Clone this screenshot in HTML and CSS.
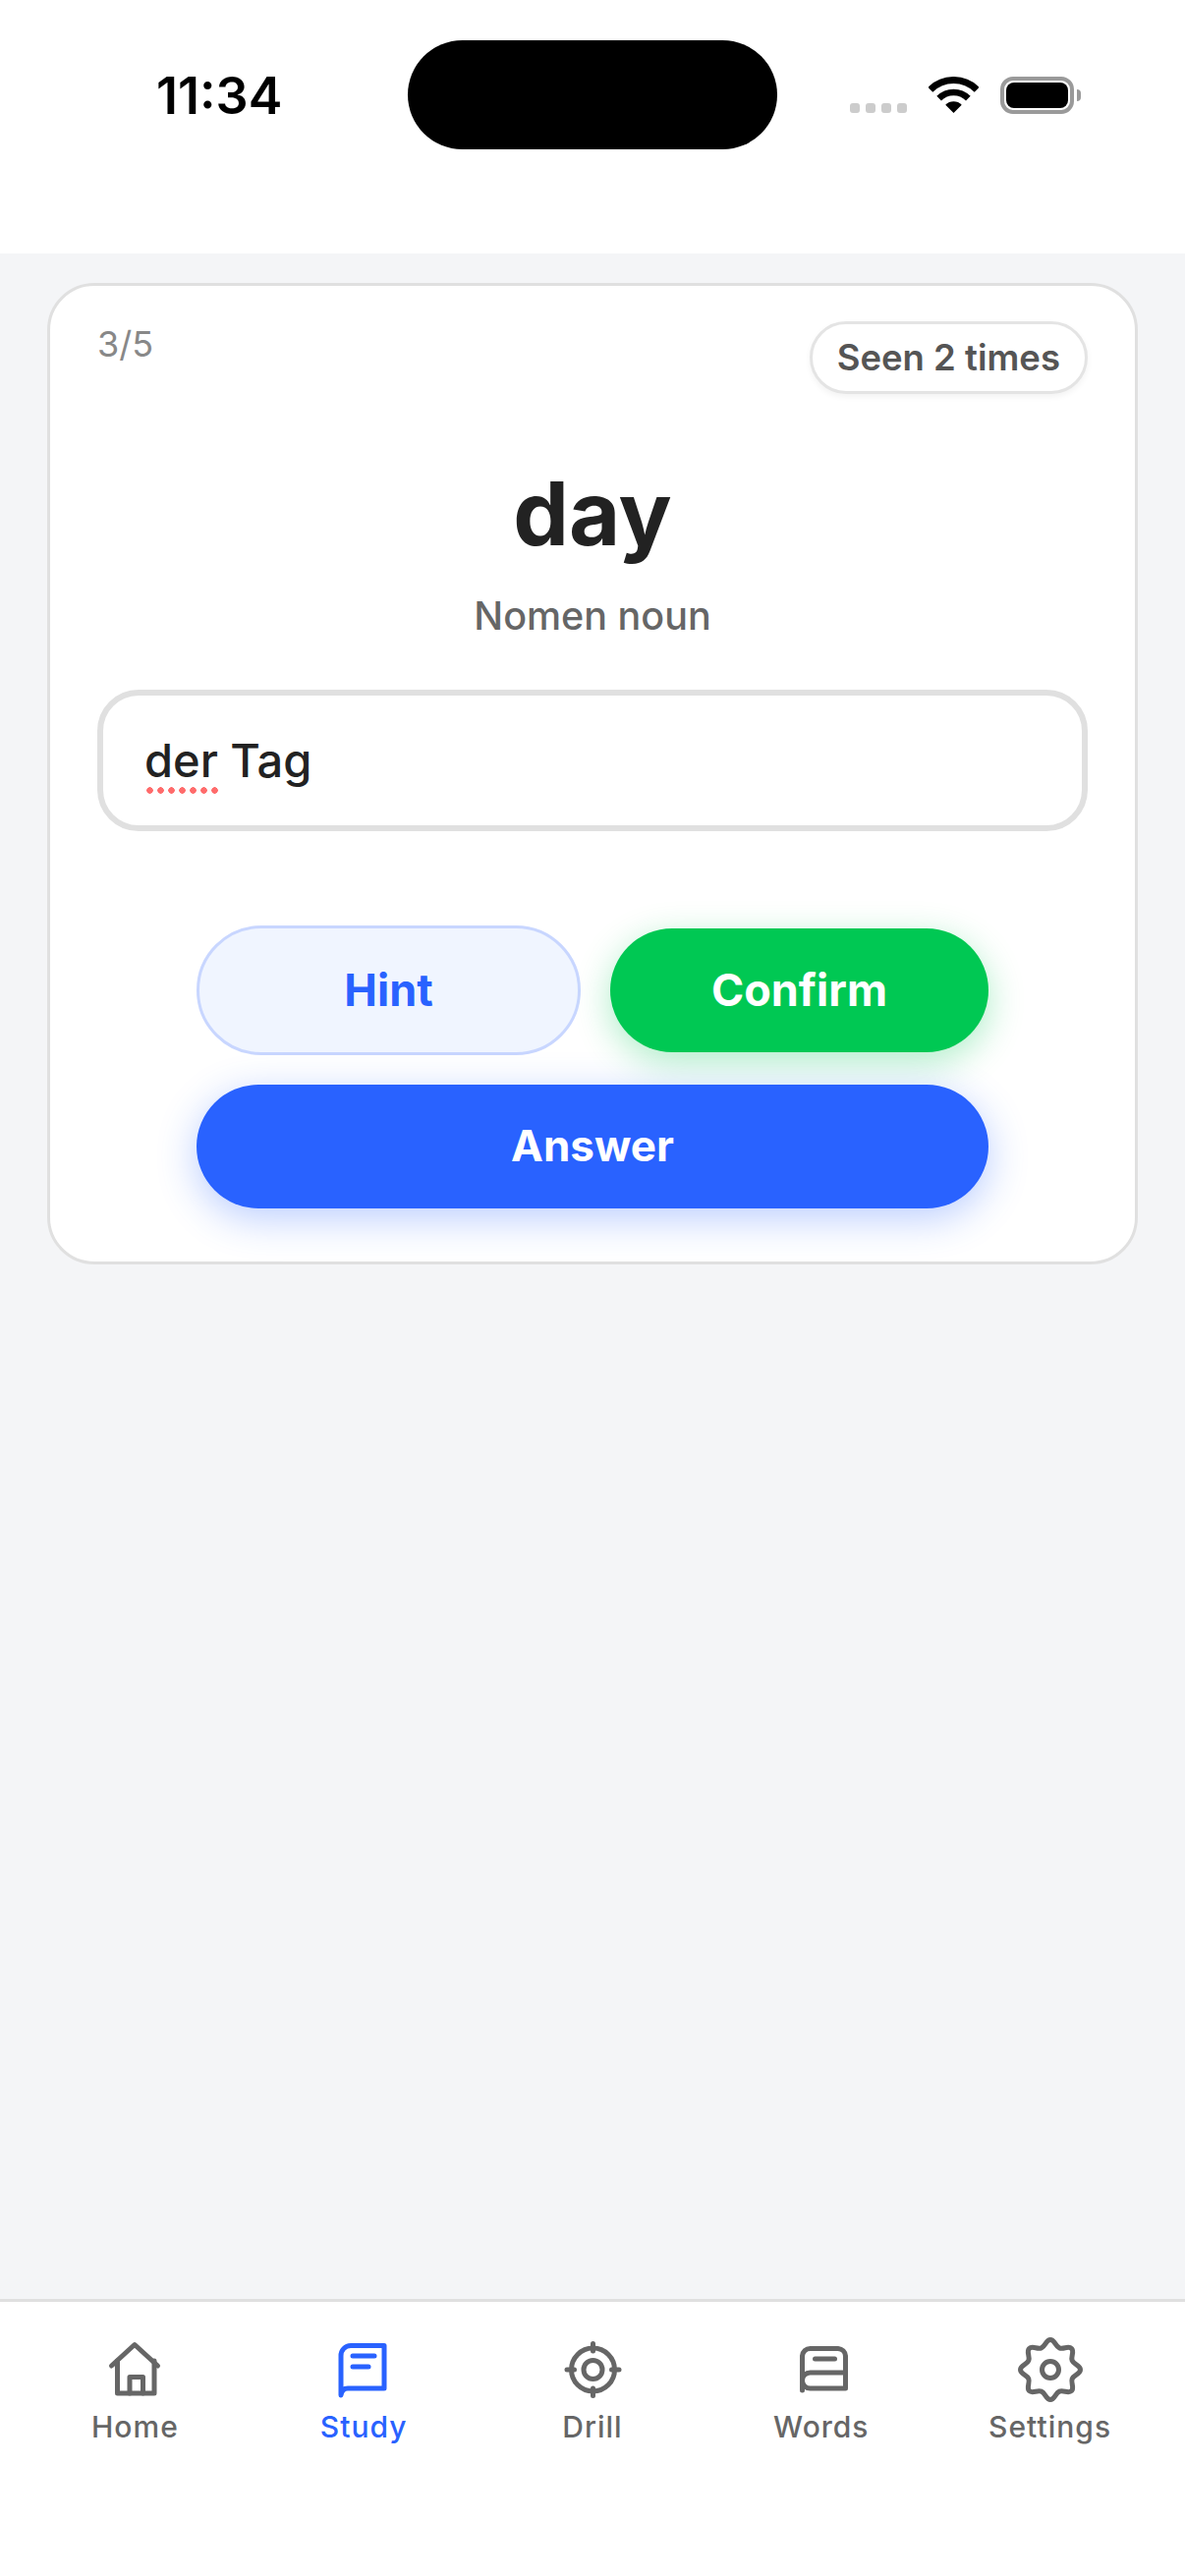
FILE: index.html
```html
<!DOCTYPE html>
<html lang="en">
<head>
    <meta charset="UTF-8">
    <meta name="viewport" content="width=device-width, initial-scale=1.0">
    <title>Study</title>
    <link rel="stylesheet" href="styles.css">
</head>
<body>
    <!-- status bar -->
    <header class="status-bar">
        <div class="status-time">11:34</div>
        <div class="island"></div>
        <div class="status-icons">
            <div class="signal"><span></span><span></span><span></span><span></span></div>
            <svg class="wifi" width="51" height="37" viewBox="0 0 51 37">
                <path d="M1.81 13.31A33.5 33.5 0 0 1 49.19 13.31" fill="none" stroke="#000" stroke-width="7"/>
                <path d="M10.65 22.15A21 21 0 0 1 40.35 22.15" fill="none" stroke="#000" stroke-width="6.6"/>
                <path d="M25.5 37L17.23 28.73A11.7 11.7 0 0 1 33.77 28.73Z" fill="#000"/>
            </svg>
            <div class="battery"><div class="battery-level"></div></div>
        </div>
    </header>

    <main class="content">
        <section class="card">
            <div class="card-top">
                <div class="progress">3/5</div>
                <div class="seen-badge">Seen 2 times</div>
            </div>

            <h1 class="word">day</h1>
            <div class="word-type">Nomen noun</div>

            <div class="answer-field"><span class="misspelled">der</span> Tag</div>

            <div class="actions">
                <button class="btn btn-hint">Hint</button>
                <button class="btn btn-confirm">Confirm</button>
                <button class="btn btn-answer">Answer</button>
            </div>
        </section>
    </main>

    <!-- bottom tabs -->
    <nav class="tab-bar">
        <a class="tab">
            <svg class="tab-icon" viewBox="-5 -5 70 70">
                <path d="M6.5 26L30 4.5L53.5 26"/>
                <path d="M12.5 21V54H50V21"/>
                <path d="M25 54V37.5H38.5V54"/>
            </svg>
            <span>Home</span>
        </a>
        <a class="tab active">
            <svg class="tab-icon" viewBox="-5 -5 70 70">
                <path d="M7 56V16A10 10 0 0 1 17 5.5H51V49H14Q8 49 7 56Z"/>
                <path d="M19 16H41"/>
                <path d="M19 27H35"/>
            </svg>
            <span>Study</span>
        </a>
        <a class="tab">
            <svg class="tab-icon" viewBox="-5 -5 70 70">
                <circle cx="30.5" cy="30" r="22"/>
                <circle cx="30.5" cy="30" r="9.5"/>
                <path d="M30.5 3.5V11"/>
                <path d="M30.5 49V56.5"/>
                <path d="M4 30H11.5"/>
                <path d="M49.5 30H57"/>
            </svg>
            <span>Drill</span>
        </a>
        <a class="tab">
            <svg class="tab-icon" viewBox="-5 -5 70 70">
                <path d="M10.5 51V16A8 8 0 0 1 18.5 8.5H47A8 8 0 0 1 54.5 16V49H18.5A8 8 0 0 1 18.5 33H54.5"/>
                <path d="M23.5 19H43.5"/>
            </svg>
            <span>Words</span>
        </a>
        <a class="tab">
            <svg class="tab-icon" viewBox="0 0 70 70">
                <path d="M35 4.5C39.5 4.5 40.02 11.11 44.18 12.83C48.34 14.55 53.39 10.25 56.57 13.43C59.75 16.61 55.45 21.66 57.17 25.82C58.89 29.98 65.5 30.5 65.5 35C65.5 39.5 58.89 40.02 57.17 44.18C55.45 48.34 59.75 53.39 56.57 56.57C53.39 59.75 48.34 55.45 44.18 57.17C40.02 58.89 39.5 65.5 35 65.5C30.5 65.5 29.98 58.89 25.82 57.17C21.66 55.45 16.61 59.75 13.43 56.57C10.25 53.39 14.55 48.34 12.83 44.18C11.11 40.02 4.5 39.5 4.5 35C4.5 30.5 11.11 29.98 12.83 25.82C14.55 21.66 10.25 16.61 13.43 13.43C16.61 10.25 21.66 14.55 25.82 12.83C29.98 11.11 30.5 4.5 35 4.5Z"/>
                <circle cx="35" cy="35" r="8.5"/>
            </svg>
            <span>Settings</span>
        </a>
    </nav>
</body>
</html>
```
FILE: styles.css
```css
* {
    box-sizing: border-box;
}
body {
    font-family: Inter, "Noto Sans", sans-serif;
    background-color: #f4f5f7;
    margin: 0;
    height: 2622px;
    display: flex;
    flex-direction: column;
    color: #222;
}

/* status bar */
.status-bar {
    height: 258px;
    background-color: white;
    padding-top: 41px;
    display: grid;
    grid-template-columns: 415px 376px 1fr;
    align-items: start;
}
.status-time {
    padding-left: 159px;
    margin-top: 27px;
    font-size: 52px;
    line-height: 60px;
    font-weight: 600;
    color: #000;
}
.island {
    height: 111px;
    background-color: black;
    border-radius: 56px;
}
.status-icons {
    display: flex;
    align-items: flex-end;
    margin-top: 37px;
    padding-left: 74px;
}
.signal {
    display: flex;
    gap: 6px;
    margin-bottom: 1px;
}
.signal span {
    width: 10px;
    height: 10px;
    border-radius: 3px;
    background-color: #ccc;
}
.wifi {
    margin-left: 22px;
    margin-bottom: 1px;
}
.battery {
    position: relative;
    width: 75px;
    height: 38px;
    margin-left: 22px;
    border: 4px solid #9a9a9a;
    border-radius: 13px;
    padding: 2px;
}
.battery::after {
    content: "";
    position: absolute;
    right: -11px;
    top: 9px;
    width: 4px;
    height: 12px;
    background-color: #9a9a9a;
    border-radius: 0 6px 6px 0;
}
.battery-level {
    height: 100%;
    background-color: black;
    border-radius: 8px;
}

/* card */
.content {
    flex: 1;
    padding: 30px 48px;
}
.card {
    background-color: white;
    border: 3px solid #e0e0e0;
    border-radius: 48px;
    padding: 36px 48px 54px;
}
.card-top {
    display: flex;
    justify-content: space-between;
    align-items: flex-start;
}
.progress {
    margin-top: 3px;
    font-size: 36px;
    line-height: 40px;
    color: #888;
}
.seen-badge {
    border: 3px solid #e4e4e4;
    border-radius: 40px;
    padding: 0 25px;
    height: 74px;
    line-height: 68px;
    font-size: 36.5px;
    font-weight: 600;
    color: #555;
    background-color: white;
    box-shadow: 0 3px 6px rgba(0, 0, 0, 0.05);
}
.word {
    margin: 72px 0 0;
    text-align: center;
    font-size: 90px;
    line-height: 100px;
    font-weight: 700;
    color: #222;
}
.word-type {
    margin-top: 31px;
    text-align: center;
    font-size: 39.5px;
    line-height: 46px;
    font-weight: 500;
    color: #666;
}
.answer-field {
    margin-top: 52px;
    height: 144px;
    border: 6px solid #e0e0e0;
    border-radius: 42px;
    padding-left: 42px;
    font-size: 47px;
    line-height: 132px;
    font-weight: 500;
    color: #222;
}
.misspelled {
    background-image: radial-gradient(circle, #ff6b6b 3px, transparent 3.5px);
    background-size: 11px 7px;
    background-position: left bottom;
    background-repeat: repeat-x;
    padding-bottom: 6px;
}
.actions {
    margin: 96px 101px 0;
    display: grid;
    grid-template-columns: 391px 385px;
    column-gap: 30px;
    row-gap: 30px;
    align-items: center;
}
.btn {
    border: none;
    height: 126px;
    border-radius: 63px;
    padding-bottom: 3px;
    font-family: inherit;
    font-size: 45px;
    font-weight: 700;
    color: white;
    cursor: pointer;
}
.btn-hint {
    height: 132px;
    border-radius: 66px;
    border: 3px solid #c8d6ff;
    background-color: #f0f5ff;
    color: #2962ff;
}
.btn-confirm {
    background-color: #00c853;
    box-shadow: 0 10px 36px rgba(0, 200, 83, 0.32);
}
.btn-answer {
    grid-column: 1 / 3;
    font-size: 44px;
    background-color: #2962ff;
    box-shadow: 0 10px 40px rgba(41, 98, 255, 0.32);
}

/* bottom tabs */
.tab-bar {
    height: 282px;
    background-color: white;
    border-top: 3px solid #e0e0e0;
    padding: 34px 21px 0;
    display: grid;
    grid-template-columns: repeat(5, 1fr);
}
.tab {
    display: flex;
    flex-direction: column;
    align-items: center;
    font-size: 30px;
    line-height: 36px;
    font-weight: 500;
    letter-spacing: 1px;
    color: #666;
}
.tab-icon {
    width: 70px;
    height: 70px;
    margin-bottom: 5px;
    fill: none;
    stroke: #666;
    stroke-width: 5;
    stroke-linecap: round;
    stroke-linejoin: round;
}
.tab.active {
    color: #2962ff;
}
.tab.active .tab-icon {
    stroke: #2962ff;
}
```
